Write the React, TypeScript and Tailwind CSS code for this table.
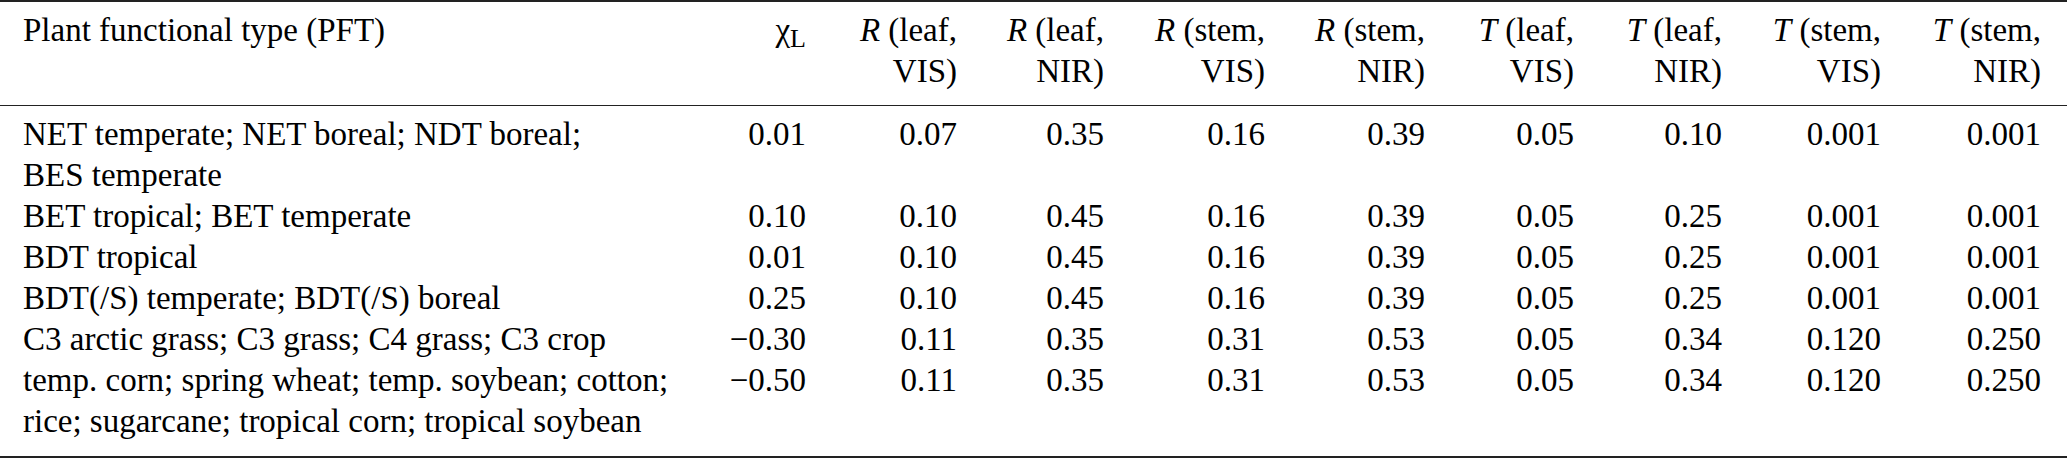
import React from "react";

type Row = { name: React.ReactNode; vals: string[] };

const rows: Row[] = [
  {
    name: (
      <>
        NET temperate; NET boreal; NDT boreal;
        <br />
        BES temperate
      </>
    ),
    vals: ["0.01", "0.07", "0.35", "0.16", "0.39", "0.05", "0.10", "0.001", "0.001"],
  },
  {
    name: "BET tropical; BET temperate",
    vals: ["0.10", "0.10", "0.45", "0.16", "0.39", "0.05", "0.25", "0.001", "0.001"],
  },
  {
    name: "BDT tropical",
    vals: ["0.01", "0.10", "0.45", "0.16", "0.39", "0.05", "0.25", "0.001", "0.001"],
  },
  {
    name: "BDT(/S) temperate; BDT(/S) boreal",
    vals: ["0.25", "0.10", "0.45", "0.16", "0.39", "0.05", "0.25", "0.001", "0.001"],
  },
  {
    name: "C3 arctic grass; C3 grass; C4 grass; C3 crop",
    vals: ["\u22120.30", "0.11", "0.35", "0.31", "0.53", "0.05", "0.34", "0.120", "0.250"],
  },
  {
    name: (
      <>
        temp. corn; spring wheat; temp. soybean; cotton;
        <br />
        rice; sugarcane; tropical corn; tropical soybean
      </>
    ),
    vals: ["\u22120.50", "0.11", "0.35", "0.31", "0.53", "0.05", "0.34", "0.120", "0.250"],
  },
];

const headers: { sym: string; a: string; b: string }[] = [
  { sym: "R", a: "leaf", b: "VIS" },
  { sym: "R", a: "leaf", b: "NIR" },
  { sym: "R", a: "stem", b: "VIS" },
  { sym: "R", a: "stem", b: "NIR" },
  { sym: "T", a: "leaf", b: "VIS" },
  { sym: "T", a: "leaf", b: "NIR" },
  { sym: "T", a: "stem", b: "VIS" },
  { sym: "T", a: "stem", b: "NIR" },
];

const gridCls =
  "grid grid-cols-[683px_100px_151px_147px_161px_160px_149px_148px_159px_160px] pl-[23px]";

export default function App() {
  return (
    <div className="w-[2067px] h-[458px] bg-white text-black font-['Liberation_Serif','Times_New_Roman',serif] text-[33px] leading-[41px]">
      <div className="border-t-2 border-b-2 border-[#222]">
        {/* Header */}
        <div className={`${gridCls} pt-[8px] pb-[13px]`}>
          <div>Plant functional type (PFT)</div>
          <div className="text-right">
            χ<span className="text-[26px] leading-none align-[-6px]">L</span>
          </div>
          {headers.map((h, i) => (
            <div key={i} className="text-right whitespace-nowrap">
              <i>{h.sym}</i> ({h.a},
              <br />
              {h.b})
            </div>
          ))}
        </div>
        <div className="h-px bg-[#222]" />
        {/* Body */}
        <div className={`${gridCls} pt-[8px] pb-[14px]`}>
          {rows.map((r, i) => (
            <React.Fragment key={i}>
              <div className="whitespace-nowrap">{r.name}</div>
              {r.vals.map((v, j) => (
                <div key={j} className="text-right">
                  {v}
                </div>
              ))}
            </React.Fragment>
          ))}
        </div>
      </div>
    </div>
  );
}
